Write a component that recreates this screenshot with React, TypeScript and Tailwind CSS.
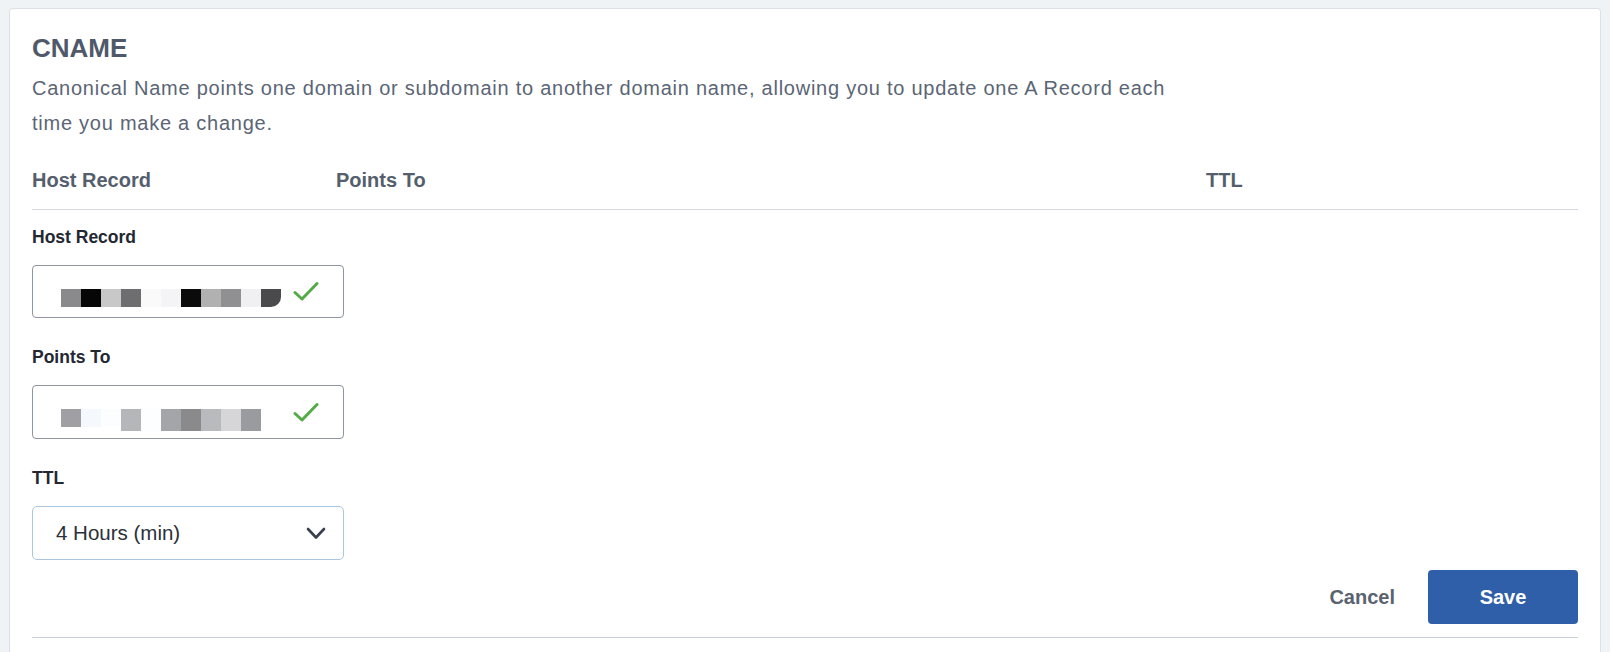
import React from 'react';

const font = { fontFamily: '"Liberation Sans", Arial, sans-serif' };

const hostBlocks = ['#8a8a8c', '#060606', '#c8c8c9', '#6e6e70', '#fafafa', '#f4f4f6', '#0b0b0b', '#b1b1b2', '#909092', '#f0f0f2', '#4a4a4c'];
const pointsBlocks = ['#a0a0a4', '#f5f8fc', '#fbfdfe', '#b4b6ba', '#fdfeff', '#a4a5a8', '#8a8a8c', '#b8babe', '#d6d6d8', '#9a9b9f'];

function Check() {
  return (
    <svg width="26" height="21" viewBox="0 0 26 21" fill="none">
      <path d="M2 11.5 L9 18 L24 2.5" stroke="#55aa48" strokeWidth="3" strokeLinecap="round" strokeLinejoin="round" />
    </svg>
  );
}

function BlurredValue({ blocks, tall }: { blocks: string[]; tall?: boolean }) {
  return (
    <div className="flex items-start self-start mt-[23px]">
      {blocks.map((c, i) => (
        <div
          key={i}
          className={`w-[20px] ${tall && i > 2 ? 'h-[22px]' : 'h-[18px]'} ${i === blocks.length - 1 && !tall ? 'rounded-br-[10px]' : ''}`}
          style={{ backgroundColor: c }}
        />
      ))}
    </div>
  );
}

function Field({ label, children }: { label: string; children: React.ReactNode }) {
  return (
    <div className="flex flex-col">
      <label className="text-[17.5px] leading-[24px] font-semibold text-[#232832]">{label}</label>
      <div className="mt-4">{children}</div>
    </div>
  );
}

export default function App() {
  return (
    <div className="min-h-screen bg-[#f0f3f6] pt-[8px] px-[9px]" style={font}>
      <div className="bg-white border border-[#dce0e6] rounded-t-[4px] border-b-0 px-[22px] pt-[24px] pb-[20px]">
        <h2 className="text-[26px] leading-[30px] font-semibold text-[#4f5969]">CNAME</h2>
        <p className="mt-[8px] text-[20px] leading-[35px] tracking-[0.75px] text-[#5b6575]">
          Canonical Name points one domain or subdomain to another domain name, allowing you to update one A Record each
          <br />
          time you make a change.
        </p>

        <div className="mt-[24px] flex border-b border-[#d6dae0] pb-[14px] text-[20px] leading-[30px] font-semibold text-[#555e6d]">
          <div className="w-[304px]">Host Record</div>
          <div className="w-[870px]">Points To</div>
          <div>TTL</div>
        </div>

        <div className="pt-[15px] flex flex-col gap-[27px] w-[312px]">
          <Field label="Host Record">
            <div className="h-[53px] border border-[#8e96a2] rounded-[4px] flex items-center justify-between pl-[28px] pr-[24px]">
              <BlurredValue blocks={hostBlocks} />
              <Check />
            </div>
          </Field>
          <Field label="Points To">
            <div className="h-[54px] border border-[#8e96a2] rounded-[4px] flex items-center justify-between pl-[28px] pr-[24px]">
              <BlurredValue blocks={pointsBlocks} tall />
              <Check />
            </div>
          </Field>
          <Field label="TTL">
            <div className="h-[54px] border border-[#a9c5e0] rounded-[5px] flex items-center justify-between pl-[23px] pr-[17px]">
              <span className="text-[20.5px] text-[#2b303a]">4 Hours (min)</span>
              <svg width="20" height="13" viewBox="0 0 20 13" fill="none">
                <path d="M2 2 L10 10.5 L18 2" stroke="#3a414e" strokeWidth="2.6" strokeLinecap="round" strokeLinejoin="round" />
              </svg>
            </div>
          </Field>
        </div>

        <div className="mt-[10px] flex justify-end items-center gap-[33px] border-b border-[#c6cedc] pb-[13px]">
          <button className="text-[20px] font-semibold text-[#5a6270]">Cancel</button>
          <button className="w-[150px] h-[54px] rounded-[4px] bg-[#2f5fa8] text-white text-[20px] font-semibold">Save</button>
        </div>
      </div>
    </div>
  );
}
